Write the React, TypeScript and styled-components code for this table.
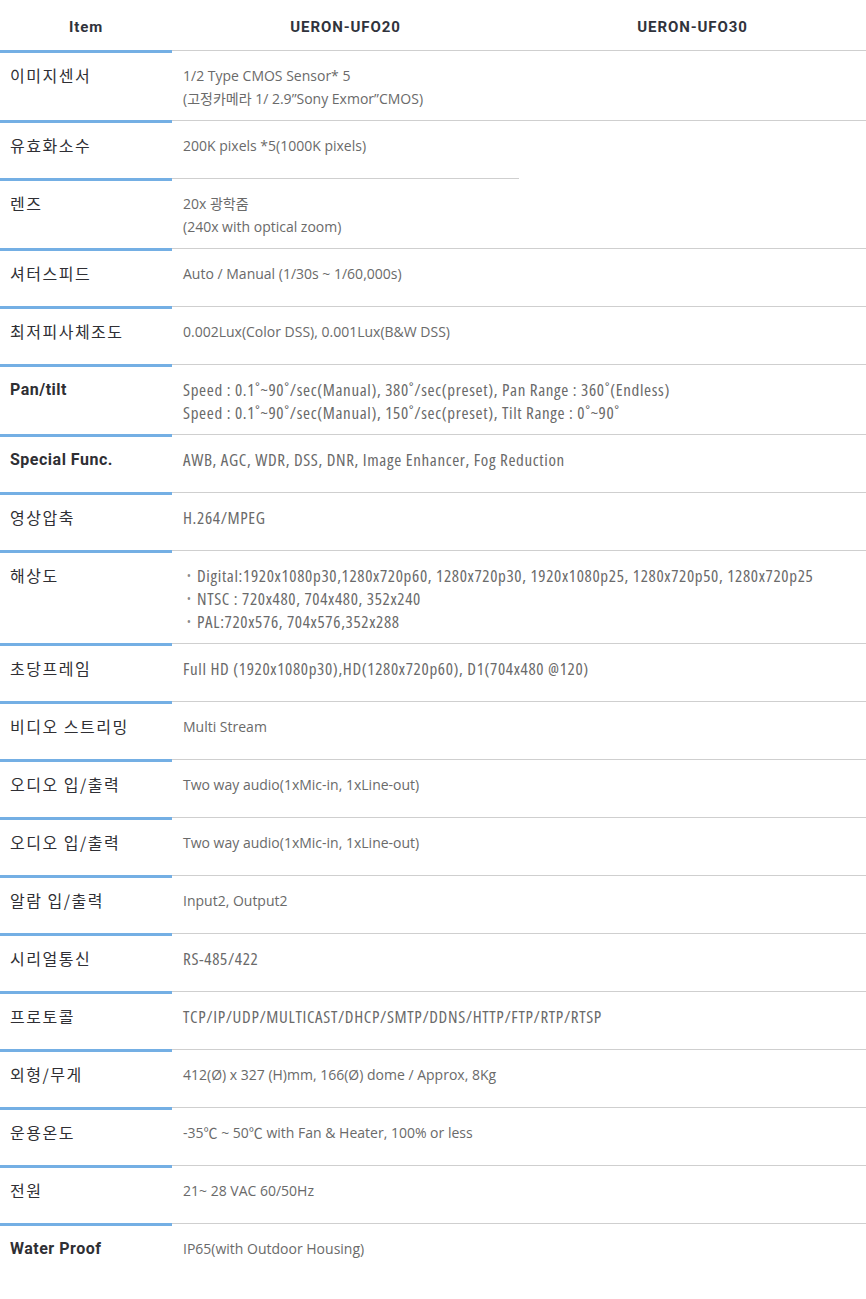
import React from "react";
import styled, { createGlobalStyle } from "styled-components";

const Global = createGlobalStyle`
  html, body { margin: 0; padding: 0; background: #fff; }
  body { font-family: "Open Sans", "Noto Sans CJK KR", sans-serif; }
`;

const Table = styled.table`
  width: 866px;
  border-collapse: separate;
  border-spacing: 0;
  table-layout: fixed;
`;

const HeadCell = styled.th`
  height: 50px;
  padding: 3px 0 0 0;
  box-sizing: border-box;
  text-align: center;
  vertical-align: middle;
  font-family: Roboto, "Noto Sans CJK KR", sans-serif;
  font-weight: 700;
  font-size: 15px;
  letter-spacing: 0.9px;
  color: #30333c;
`;

const Label = styled.th<{ $bold?: boolean }>`
  border-top: 3px solid #74afe4;
  padding: 11px 10px 21px 10px;
  text-align: left;
  vertical-align: top;
  line-height: 23px;
  font-family: ${(p) =>
    p.$bold ? `Roboto, "Noto Sans CJK KR", sans-serif` : `"Noto Sans CJK KR", sans-serif`};
  font-size: 16px;
  font-weight: ${(p) => (p.$bold ? 700 : 400)};
  letter-spacing: ${(p) => (p.$bold ? "0.5px" : "1.5px")};
  color: #2f2f34;
  white-space: nowrap;
`;

const Cell = styled.td<{ $narrow?: boolean }>`
  border-top: 1px solid #cfcfcf;
  padding: 13px 11px 10px 11px;
  vertical-align: top;
  line-height: 23px;
  font-family: "Open Sans", "Noto Sans CJK KR", sans-serif;
  font-size: ${(p) => (p.$narrow ? "17px" : "14px")};
  letter-spacing: ${(p) => (p.$narrow ? "0.65px" : "0")};
  color: #6a6a6a;
  font-stretch: ${(p) => (p.$narrow ? "75%" : "100%")};
  white-space: nowrap;
`;

const Line = styled.div``;

const Bullets = styled.ul`
  list-style: none;
  margin: 0;
  padding: 0 0 0 4px;
`;

const Bullet = styled.li`
  &::before {
    content: "•";
    display: inline-block;
    width: 10px;
    font-size: 10px;
    letter-spacing: 0;
    line-height: 1;
    vertical-align: 2px;
    color: #8a8a8a;
  }
`;

type Row = {
  label: string;
  bold?: boolean;
  lines: string[];
  kind?: "plain" | "narrow" | "bullets";
  third?: "cell" | "span2" | "none";
};

const rows: Row[] = [
  { label: "이미지센서", lines: ["1/2 Type CMOS Sensor* 5", "(고정카메라 1/ 2.9”Sony Exmor”CMOS)"] },
  { label: "유효화소수", lines: ["200K pixels *5(1000K pixels)"], third: "span2" },
  { label: "렌즈", lines: ["20x 광학줌", "(240x with optical zoom)"], third: "none" },
  { label: "셔터스피드", lines: ["Auto / Manual (1/30s ~ 1/60,000s)"] },
  { label: "최저피사체조도", lines: ["0.002Lux(Color DSS), 0.001Lux(B&W DSS)"] },
  {
    label: "Pan/tilt",
    bold: true,
    kind: "narrow",
    lines: [
      "Speed : 0.1˚~90˚/sec(Manual), 380˚/sec(preset), Pan Range : 360˚(Endless)",
      "Speed : 0.1˚~90˚/sec(Manual), 150˚/sec(preset), Tilt Range : 0˚~90˚",
    ],
  },
  {
    label: "Special Func.",
    bold: true,
    kind: "narrow",
    lines: ["AWB, AGC, WDR, DSS, DNR, Image Enhancer, Fog Reduction"],
  },
  { label: "영상압축", kind: "narrow", lines: ["H.264/MPEG"] },
  {
    label: "해상도",
    kind: "bullets",
    lines: [
      "Digital:1920x1080p30,1280x720p60, 1280x720p30, 1920x1080p25, 1280x720p50, 1280x720p25",
      "NTSC : 720x480, 704x480, 352x240",
      "PAL:720x576, 704x576,352x288",
    ],
  },
  { label: "초당프레임", kind: "narrow", lines: ["Full HD (1920x1080p30),HD(1280x720p60), D1(704x480 @120)"] },
  { label: "비디오 스트리밍", lines: ["Multi Stream"] },
  { label: "오디오 입/출력", lines: ["Two way audio(1xMic-in, 1xLine-out)"] },
  { label: "오디오 입/출력", lines: ["Two way audio(1xMic-in, 1xLine-out)"] },
  { label: "알람 입/출력", lines: ["Input2, Output2"] },
  { label: "시리얼통신", kind: "narrow", lines: ["RS-485/422"] },
  { label: "프로토콜", kind: "narrow", lines: ["TCP/IP/UDP/MULTICAST/DHCP/SMTP/DDNS/HTTP/FTP/RTP/RTSP"] },
  { label: "외형/무게", lines: ["412(Ø) x 327 (H)mm, 166(Ø) dome / Approx, 8Kg"] },
  { label: "운용온도", lines: ["-35℃ ~ 50℃ with Fan & Heater, 100% or less"] },
  { label: "전원", lines: ["21~ 28 VAC 60/50Hz"] },
  { label: "Water Proof", bold: true, lines: ["IP65(with Outdoor Housing)"] },
];

export default function App() {
  return (
    <>
      <Global />
      <Table>
        <colgroup>
          <col style={{ width: 172 }} />
          <col style={{ width: 347 }} />
          <col style={{ width: 347 }} />
        </colgroup>
        <thead>
          <tr>
            <HeadCell>Item</HeadCell>
            <HeadCell>UERON-UFO20</HeadCell>
            <HeadCell>UERON-UFO30</HeadCell>
          </tr>
        </thead>
        <tbody>
          {rows.map((r, i) => (
            <tr key={i}>
              <Label $bold={r.bold}>{r.label}</Label>
              <Cell $narrow={r.kind === "narrow" || r.kind === "bullets"}>
                {r.kind === "bullets" ? (
                  <Bullets>
                    {r.lines.map((l, j) => (
                      <Bullet key={j}>{l}</Bullet>
                    ))}
                  </Bullets>
                ) : (
                  r.lines.map((l, j) => <Line key={j}>{l}</Line>)
                )}
              </Cell>
              {r.third === "none" ? null : <Cell rowSpan={r.third === "span2" ? 2 : 1} />}
            </tr>
          ))}
        </tbody>
      </Table>
    </>
  );
}
